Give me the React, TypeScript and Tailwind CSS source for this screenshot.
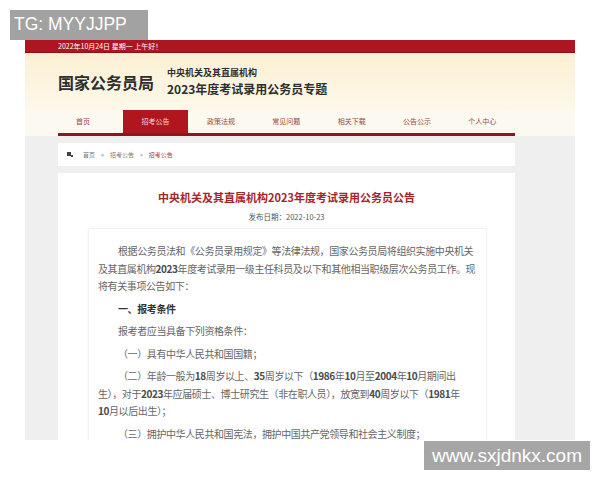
export default function App() {
  const nav = ["首页", "招考公告", "政策法规", "常见问题", "相关下载", "公告公示", "个人中心"];

  const num = (s: string) => <span className="font-semibold text-[#4a4a4a]">{s}</span>;

  return (
    <div className="relative w-[600px] h-[480px] bg-white overflow-hidden font-['Noto_Sans_CJK_SC',sans-serif]">
      <div className="ml-[25px] mt-[40px] w-[550px] h-[400px] overflow-hidden flex flex-col">
        {/* top red bar */}
        <div className="shrink-0 h-[13px] bg-[#ad1620] border-b border-[#8f1018] pl-[33px] flex items-center text-[7px] leading-none text-white">
          2022年10月24日 星期一 上午好！
        </div>

        {/* header */}
        <div className="shrink-0 h-[57px] bg-gradient-to-b from-[#fbf0d3] to-[#fdf8ea] pl-[33px] flex items-center gap-[13px]">
          <div className="text-[16px] font-bold text-[#2e2e2e] leading-none">国家公务员局</div>
          <div className="flex flex-col gap-[4px] text-[#2e2e2e] font-bold">
            <div className="text-[9px] leading-[11px]">中央机关及其直属机构</div>
            <div className="text-[12px] leading-[14px]">2023年度考试录用公务员专题</div>
          </div>
        </div>

        {/* nav */}
        <div className="shrink-0 h-[26px] bg-[#fcf9f1] pl-[33px]">
          <div className="w-[457px] h-[26px] flex border-b-[3px] border-[#8c161c]">
            {nav.map((item, i) => (
              <div
                key={item}
                className={
                  (i === 0 ? "w-[65px] pr-[15px] " : "w-[65.5px] ") +
                  (i === 1 ? "bg-[#b0161e] text-[#f6d4d4] " : "text-[#9a4a3c] ") +
                  "h-[23px] mt-auto flex items-center justify-center text-[7px] leading-none"
                }
              >
                {item}
              </div>
            ))}
          </div>
        </div>

        {/* gray content area */}
        <div className="flex-1 min-h-0 overflow-hidden bg-[#efefef] pt-[7px] pl-[33px]">
          <div className="w-[457px] h-full flex flex-col gap-[7px]">
            <div className="shrink-0 h-[23px] bg-white flex items-center pl-[9px] gap-[6px] text-[6px] leading-none text-[#777]">
              <svg width="6" height="5" viewBox="0 0 6 5" className="mr-[4px]">
                <rect x="0" y="0" width="4" height="4" fill="#444" />
                <rect x="4" y="3" width="2" height="2" fill="#444" />
              </svg>
              <span>首页</span>
              <span>»</span>
              <span>招考公告</span>
              <span>»</span>
              <span className="text-[#b0383c]">招考公告</span>
            </div>

            <div className="flex-1 bg-white pt-[16px] flex flex-col items-center">
              <div className="text-[11px] leading-[16px] font-bold text-[#a3262b]">
                中央机关及其直属机构2023年度考试录用公务员公告
              </div>
              <div className="mt-[6px] text-[7.5px] leading-[12px] text-[#555]">发布日期：2022-10-23</div>

              <div className="mt-[5px] self-stretch ml-[30px] mr-[28px] flex-1 border border-[#f2f2f2] shadow-[0_0_4px_rgba(0,0,0,0.04)] pt-[13px] px-[9px] text-[10px] tracking-[-0.4px] leading-[17.5px] text-[#666] whitespace-nowrap">
                <p className="indent-[20px]">
                  根据公务员法和《公务员录用规定》等法律法规，国家公务员局将组织实施中央机关
                  <br />
                  及其直属机构{num("2023")}年度考试录用一级主任科员及以下和其他相当职级层次公务员工作。现
                  <br />
                  将有关事项公告如下：
                </p>
                <p className="indent-[20px] mt-[5px] font-bold text-[#333]">一、报考条件</p>
                <p className="indent-[20px] mt-[5px]">报考者应当具备下列资格条件：</p>
                <p className="indent-[20px] mt-[5px]">（一）具有中华人民共和国国籍；</p>
                <p className="indent-[20px] mt-[5px]">
                  （二）年龄一般为{num("18")}周岁以上、{num("35")}周岁以下（{num("1986")}年{num("10")}月至{num("2004")}年{num("10")}月期间出
                  <br />
                  生），对于{num("2023")}年应届硕士、博士研究生（非在职人员），放宽到{num("40")}周岁以下（{num("1981")}年
                  <br />
                  {num("10")}月以后出生）；
                </p>
                <p className="indent-[20px] mt-[5px]">（三）拥护中华人民共和国宪法，拥护中国共产党领导和社会主义制度；</p>
              </div>
            </div>
          </div>
        </div>
      </div>

      {/* overlays */}
      <div className="absolute left-[10px] top-[10px] w-[138px] h-[30px] bg-[#a2a2a2] flex items-center pl-[4px] text-white text-[17.5px] leading-none font-['Liberation_Sans',sans-serif]">
        TG: MYYJJPP
      </div>
      <div className="absolute left-[424px] top-[441px] w-[166px] h-[29px] bg-[#a6a6a6] flex items-center justify-center text-white text-[19px] leading-none font-['Liberation_Sans',sans-serif]">
        www.sxjdnkx.com
      </div>
    </div>
  );
}
